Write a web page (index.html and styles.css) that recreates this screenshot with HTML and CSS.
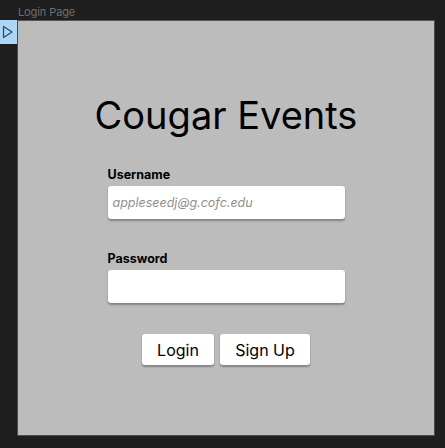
FILE: index.html
```html
<!DOCTYPE html>
<html>
<head>
<meta charset="utf-8">
<link rel="stylesheet" href="styles.css">
</head>
<body>
<div class="frame-title">Login Page</div>
<div class="stage">
  <div class="tab">
    <svg width="12" height="14" viewBox="0 0 12 14"><path d="M1.5 1.5 L10 7 L1.5 12.5 Z" fill="none" stroke="#2f4a63" stroke-width="1.3" stroke-linejoin="round"/></svg>
  </div>
  <div class="frame">
    <h1 class="title">Cougar Events</h1>
    <div class="form">
      <label class="label">Username</label>
      <div class="input"><span class="placeholder">appleseedj@g.cofc.edu</span></div>
      <label class="label label-pw">Password</label>
      <div class="input"></div>
    </div>
    <div class="buttons">
      <button class="btn btn-login">Login</button>
      <button class="btn btn-signup">Sign Up</button>
    </div>
  </div>
</div>
</body>
</html>
```
FILE: styles.css
```css
html, body {
  margin: 0;
  padding: 0;
  background: #1e1e1e;
  font-family: Inter, "Noto Sans", sans-serif;
}
body {
  width: 445px;
  height: 448px;
  overflow: hidden;
}
.frame-title {
  height: 20px;
  padding-left: 18px;
  font-size: 11px;
  line-height: 25px;
  color: #6e6e6e;
  letter-spacing: -0.1px;
}
.stage {
  display: flex;
  align-items: flex-start;
}
.tab {
  width: 17px;
  height: 24px;
  background: #acd6f7;
  display: flex;
  align-items: center;
  justify-content: flex-start;
  padding-left: 2px;
  box-sizing: border-box;
}
.tab svg { display: block; }
.frame {
  width: 418px;
  height: 416px;
  box-sizing: border-box;
  background: #bcbcbc;
  border: 1px solid #4b4b4b;
  border-top-color: #555;
  display: flex;
  flex-direction: column;
  align-items: center;
}
.title {
  margin: 72px 0 0 0;
  font-size: 38px;
  font-weight: 400;
  line-height: 44px;
  color: #000;
  letter-spacing: 0;
}
.form {
  width: 237px;
  margin-top: 30px;
  display: flex;
  flex-direction: column;
}
.label {
  font-size: 12.5px;
  font-weight: 700;
  color: #000;
  line-height: 16px;
  margin-bottom: 3px;
}
.label-pw {
  margin-top: 32px;
}
.input {
  height: 33px;
  background: #fff;
  border-radius: 3px;
  box-shadow: 0 1.5px 2px rgba(0,0,0,0.3);
  display: flex;
  align-items: center;
  padding-left: 5px;
}
.placeholder {
  font-size: 12.5px;
  font-style: italic;
  color: #8f8f8f;
}
.buttons {
  margin-top: 31px;
  display: flex;
  gap: 6px;
}
.btn {
  height: 31px;
  background: #fff;
  border: none;
  border-radius: 3px;
  box-shadow: 0 1.5px 2px rgba(0,0,0,0.3);
  font-family: Inter, "Noto Sans", sans-serif;
  font-size: 16px;
  color: #000;
  padding: 0;
}
.btn-login { width: 72px; }
.btn-signup { width: 90px; }
```
